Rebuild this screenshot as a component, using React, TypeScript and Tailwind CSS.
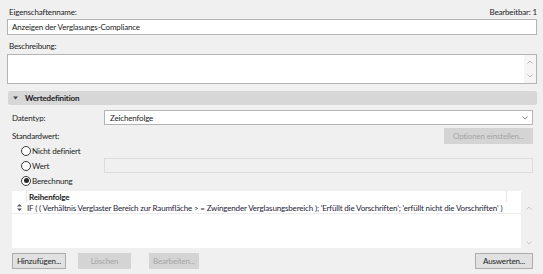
import React from 'react';

const FONT = "font-['Lato','Noto_Sans',sans-serif]";

function Chevron({ up, className }: { up?: boolean; className?: string }) {
  return (
    <svg width="6" height="4" viewBox="0 0 6 4" className={className}>
      <polyline
        points={up ? '0.5,3.5 3,1 5.5,3.5' : '0.5,0.5 3,3 5.5,0.5'}
        fill="none"
        stroke="currentColor"
        strokeWidth="0.9"
      />
    </svg>
  );
}

function Radio({ label, checked }: { label: string; checked?: boolean }) {
  return (
    <div className="flex items-center gap-[1px] h-[15px]">
      <span className="shrink-0 w-[10px] h-[10px] rounded-full border border-[#3a3a3a] bg-white flex items-center justify-center">
        {checked && <span className="w-[5px] h-[5px] rounded-full bg-[#2a2a2a]" />}
      </span>
      <span>{label}</span>
    </div>
  );
}

export default function App() {
  return (
    <div className={`w-[543px] h-[274px] overflow-hidden bg-[#f0f0f0] text-[8px] tracking-[-0.16px] leading-none text-[#1b1b1b] ${FONT}`}>
      <div className="pl-[7px] pr-[6px] pt-[6px]">
        {/* Name */}
        <div className="flex justify-between items-center h-[11px] pl-[2px]">
          <span>Eigenschaftenname:</span>
          <span>Bearbeitbar: 1</span>
        </div>
        <div className="mt-[2px] h-[16px] border border-[#b4b4b4] bg-white flex items-center px-[4px]">
          Anzeigen der Verglasungs-Compliance
        </div>

        {/* Beschreibung */}
        <div className="mt-[5px] h-[11px] flex items-center pl-[2px]">Beschreibung:</div>
        <div className="mt-[3px] h-[30px] border border-[#b4b4b4] bg-white flex justify-end">
          <div className="w-[12px] bg-[#f5f5f5] flex flex-col items-center justify-between py-[5px] text-[#b8b8b8]">
            <Chevron up />
            <Chevron />
          </div>
        </div>

        {/* Wertedefinition */}
        <div className="mt-[7px] ml-[1px] h-[14px] rounded-[2px] bg-[#d7d7d7] flex items-center font-bold">
          <svg width="5" height="4" viewBox="0 0 5 4" className="ml-[5px] mr-[7px] text-[#444]">
            <polygon points="0,0.5 5,0.5 2.5,3.5" fill="currentColor" />
          </svg>
          <span>Wertedefinition</span>
        </div>

        <div className="pl-[5px] pr-[4px]">
          <div className="mt-[5px] flex items-center h-[15px]">
            <span className="w-[92px]">Datentyp:</span>
            <div className="flex-1 h-[15px] border border-[#b4b4b4] bg-white flex items-center justify-between pl-[5px] pr-[4px]">
              <span>Zeichenfolge</span>
              <Chevron className="text-[#777]" />
            </div>
          </div>

          <div className="mt-[3px] flex items-center justify-between h-[16px]">
            <span>Standardwert:</span>
            <div className="w-[89px] h-[16px] bg-[#d4d4d4] text-[#a4a4a4] flex items-center justify-center">
              Optionen einstellen...
            </div>
          </div>

          <div className="ml-[9px] -mt-[1px] flex flex-col">
            <Radio label="Nicht definiert" />
            <div className="flex items-center">
              <div className="w-[83px]">
                <Radio label="Wert" />
              </div>
              <div className="flex-1 h-[15px] border border-[#dcdcdc] bg-[#f0f0f0]" />
            </div>
            <Radio label="Berechnung" checked />
          </div>
        </div>

        {/* List */}
        <div className="mt-[3px] ml-[5px] h-[57px] flex">
          <div className="flex-1 min-w-0 bg-white flex flex-col">
            <div className="h-[11px] flex items-stretch">
              <div className="w-[15px] border-r border-[#e6e6e6]" />
              <div className="flex-1 flex items-center pl-[2px] font-bold border-r border-[#e6e6e6]">Reihenfolge</div>
              <div className="w-[14px]" />
            </div>
            <div className="h-[12px] flex items-center border-b border-[#ececec] text-[#1d2238]">
              <svg width="5" height="7" viewBox="0 0 5 7" className="shrink-0 ml-[5px] mr-[5px] text-[#555]">
                <polygon points="2.5,0 5,2.6 0,2.6" fill="currentColor" />
                <polygon points="2.5,7 5,4.4 0,4.4" fill="currentColor" />
              </svg>
              <span className="whitespace-nowrap">
                IF ( ( Verhältnis Verglaster Bereich zur Raumfläche &gt; = Zwingender Verglasungsbereich ); 'Erfüllt die Vorschriften'; 'erfüllt nicht die Vorschriften' )
              </span>
            </div>
          </div>
          <div className="w-[16px] flex flex-col items-center justify-between pt-[15px] pb-[3px] text-[#c2c2c2]">
            <Chevron up />
            <Chevron />
          </div>
        </div>

        {/* Buttons */}
        <div className="mt-[5px] ml-[5px] mr-[4px] flex items-center h-[16px]">
          <div className="w-[54px] h-[16px] border border-[#adadad] bg-[#e1e1e1] flex items-center justify-center">
            Hinzufügen...
          </div>
          <div className="ml-[12px] w-[53px] h-[16px] bg-[#d4d4d4] text-[#a4a4a4] flex items-center justify-center">
            Löschen
          </div>
          <div className="ml-[18px] w-[50px] h-[16px] bg-[#d4d4d4] text-[#a4a4a4] flex items-center justify-center">
            Bearbeiten...
          </div>
          <div className="ml-auto w-[58px] h-[16px] border border-[#adadad] bg-[#e1e1e1] flex items-center justify-center">
            Auswerten...
          </div>
        </div>
      </div>
    </div>
  );
}
